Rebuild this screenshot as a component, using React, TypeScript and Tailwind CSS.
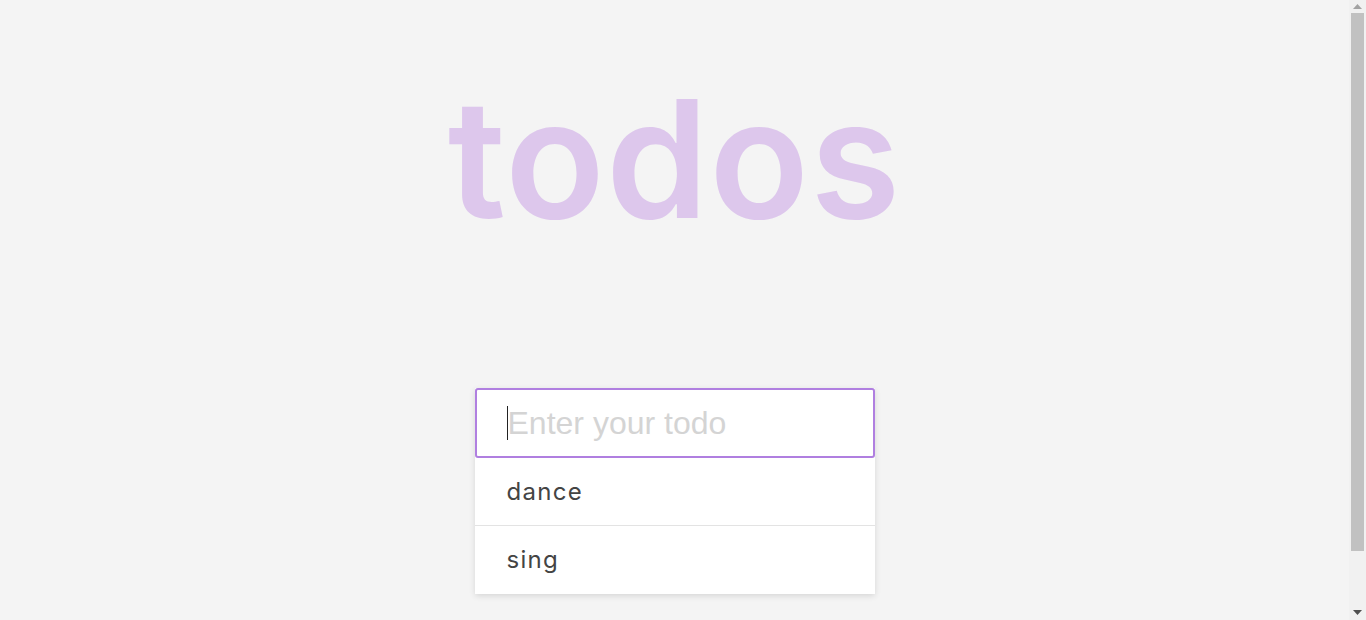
import React from "react";

function Scrollbar() {
  return (
    <div className="w-[17px] h-full bg-[#f1f1f1] flex flex-col items-center">
      <div className="h-[13px] w-full flex items-center justify-center">
        <svg width="9" height="5" viewBox="0 0 9 5">
          <path d="M4.5 0 L9 5 L0 5 Z" fill="#a3a3a3" />
        </svg>
      </div>
      <div className="w-[13px] h-[538px] bg-[#c1c1c1]" />
      <div className="flex-1 w-full flex items-end justify-center pb-[5px]">
        <svg width="9" height="5" viewBox="0 0 9 5">
          <path d="M0 0 L9 0 L4.5 5 Z" fill="#505050" />
        </svg>
      </div>
    </div>
  );
}

export default function App() {
  const items = ["dance", "sing"];
  return (
    <div className="h-[620px] w-full overflow-hidden bg-[#f4f4f4] flex flex-row">
      <main className="flex-1 flex flex-col items-center">
        <h1 className="mt-[66px] text-[164px] leading-[186px] font-[560] text-[#ddc7ec] tracking-[1px] font-[family-name:Inter,'Noto_Sans',sans-serif]">
          todos
        </h1>
        <div className="mt-[136px] w-[400px] shadow-[0_2px_6px_rgba(0,0,0,0.12)] bg-white">
          <div className="relative">
            <input
              autoFocus
              placeholder="Enter your todo"
              className="block w-full h-[70px] border-2 border-[#b07fe0] rounded-[3px] pl-[31px] pr-4 text-[32px] text-[#444] bg-white outline-none caret-transparent placeholder:text-[#d4d4d4] font-[family-name:'Liberation_Sans',Arial,sans-serif]"
            />
            <span className="absolute left-[32px] top-[18px] w-px h-[34px] bg-[#222]" />
          </div>
          {items.map((t, i) => (
            <div
              key={t}
              className={
                i < items.length - 1
                  ? "h-[68px] flex items-center pl-[32px] text-[24px] tracking-[1.3px] text-[#444] border-b border-[#e3e3e3] font-[family-name:Inter,'Noto_Sans',sans-serif]"
                  : "h-[68px] flex items-center pl-[32px] text-[24px] tracking-[1.3px] text-[#444] font-[family-name:Inter,'Noto_Sans',sans-serif]"
              }
            >
              {t}
            </div>
          ))}
        </div>
      </main>
      <Scrollbar />
    </div>
  );
}
